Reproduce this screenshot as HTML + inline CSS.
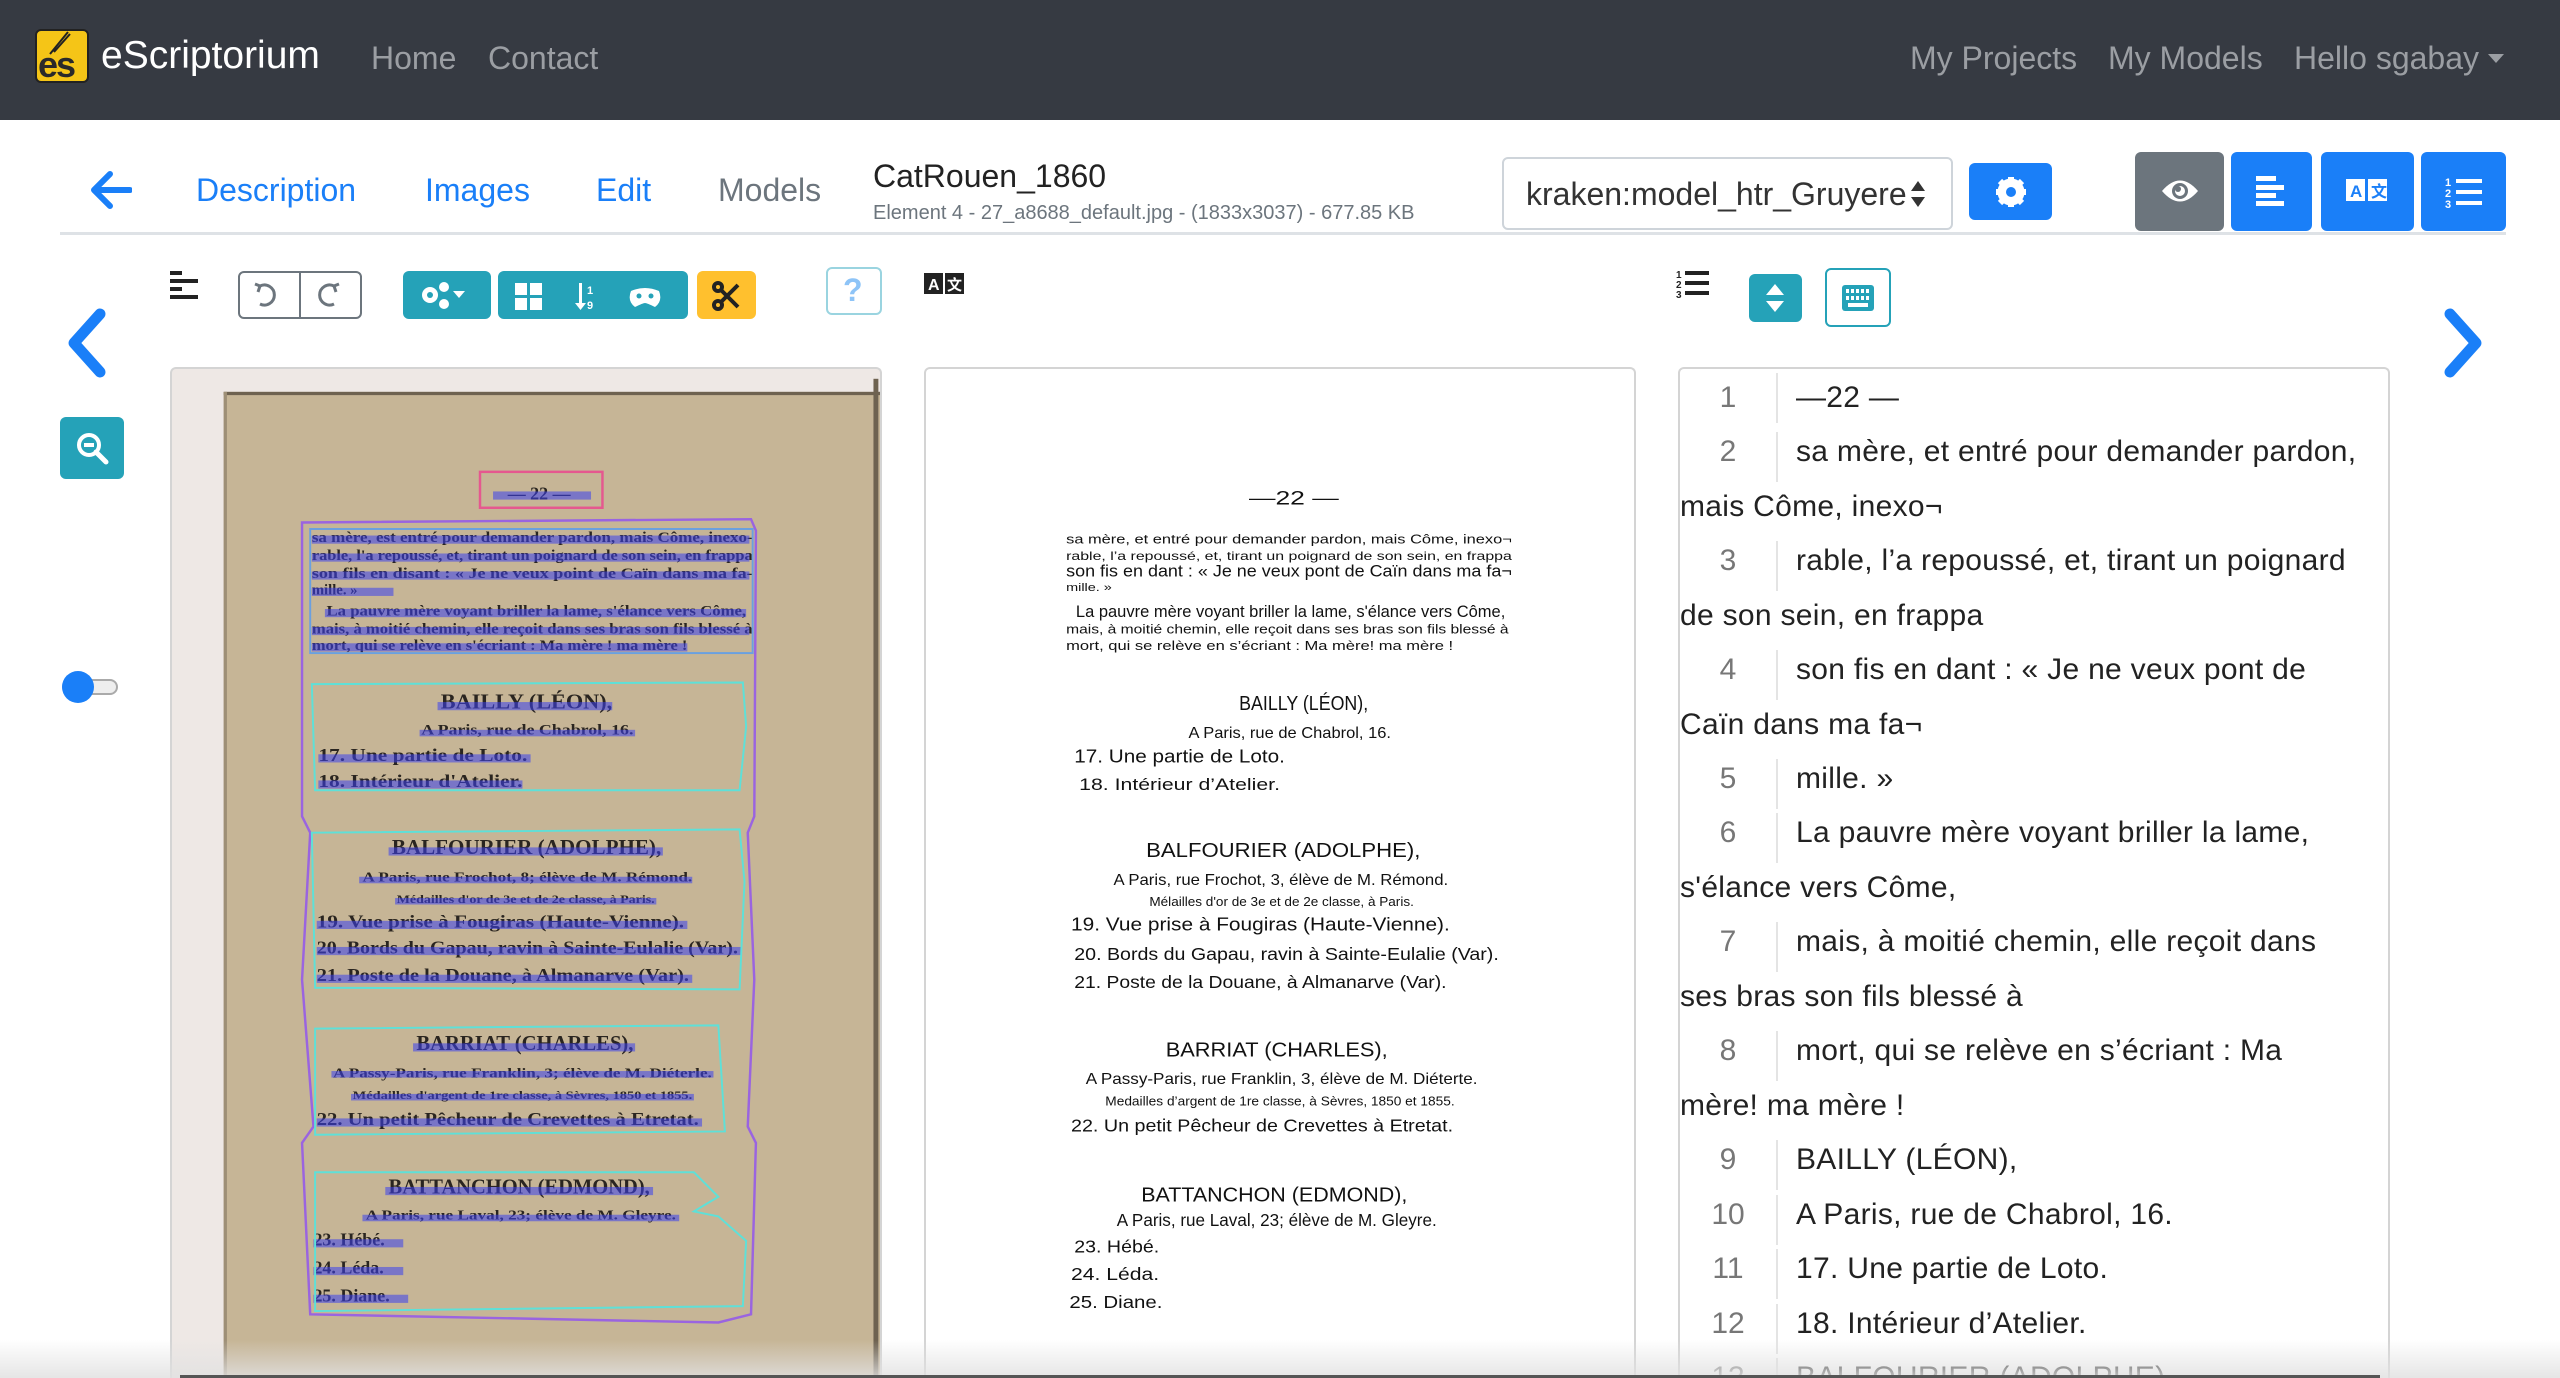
<!DOCTYPE html>
<html><head><meta charset="utf-8"><style>
*{box-sizing:border-box;margin:0;padding:0}
body{width:2560px;height:1378px;overflow:hidden;background:#fff;font-family:"Liberation Sans",sans-serif;position:relative}
.a{position:absolute}
.nav{left:0;top:0;width:2560px;height:120px;background:#363a42}
.nl{color:#9b9ea3;font-size:32px;top:40px}
.tab{font-size:32px;top:172px;color:#1a7ff8}
.btn{border-radius:6px}
.teal{background:#25a2b8}
.blue{background:#1a7ff8}
.panel{border:2px solid #d4d4d4;border-bottom:none;border-radius:6px 6px 0 0;background:#fff;overflow:hidden}
.rl{position:absolute;left:0;font-size:30px;letter-spacing:0.3px;color:#222;white-space:nowrap}
.num{position:absolute;width:96px;text-align:center;color:#777;font-size:30px}
.div{position:absolute;left:96px;width:2px;background:#e4e4e4}
</style></head><body>
<div class="a nav"></div>
<div class="a" style="left:35px;top:29px;width:54px;height:54px;background:#f5c517;border-radius:6px;border:2px solid #222"></div>
<div class="a" style="left:38px;top:44px;font-size:36px;font-weight:bold;color:#2a2a2a;letter-spacing:-2px">es</div>
<svg class="a" style="left:44px;top:28px" width="30" height="30"><path d="M6 26 L24 4 M10 24 L26 6" stroke="#222" stroke-width="2" fill="none"/></svg>
<div class="a" style="left:101px;top:34px;font-size:39px;color:#fff">eScriptorium</div>
<div class="a nl" style="left:371px">Home</div>
<div class="a nl" style="left:488px">Contact</div>
<div class="a nl" style="left:1910px">My Projects</div>
<div class="a nl" style="left:2108px">My Models</div>
<div class="a nl" style="left:2294px">Hello sgabay</div>
<svg class="a" style="left:2488px;top:54px" width="16" height="10"><path d="M0 0H16L8 9Z" fill="#9b9ea3"/></svg>

<svg class="a" style="left:88px;top:170px" width="44" height="40"><path d="M22 4 L6 20 L22 36 M6 20 H42" stroke="#1a7ff8" stroke-width="6" fill="none" stroke-linecap="round" stroke-linejoin="round"/></svg>
<div class="a tab" style="left:196px">Description</div>
<div class="a tab" style="left:425px">Images</div>
<div class="a tab" style="left:596px">Edit</div>
<div class="a tab" style="left:718px;color:#6c757d">Models</div>
<div class="a" style="left:873px;top:158px;font-size:32px;color:#222">CatRouen_1860</div>
<div class="a" style="left:873px;top:202px;font-size:20px;color:#6c757d">Element 4 - 27_a8688_default.jpg - (1833x3037) - 677.85 KB</div>
<div class="a" style="left:1502px;top:157px;width:451px;height:73px;border:2px solid #ced4da;border-radius:6px"></div>
<div class="a" style="left:1526px;top:176px;font-size:32px;color:#333">kraken:model_htr_Gruyere</div>
<svg class="a" style="left:1911px;top:181px" width="14" height="26"><path d="M7 0L14 10H0ZM7 26L14 16H0Z" fill="#333"/></svg>
<div class="a btn blue" style="left:1969px;top:163px;width:83px;height:57px"></div>
<svg class="a" style="left:1994px;top:175px" width="34" height="34" viewBox="0 0 34 34"><circle cx="17" cy="17" r="10" fill="none" stroke="#fff" stroke-width="7"/><g stroke="#fff" stroke-width="6"><path d="M17 2V32M2 17H32M6 6L28 28M28 6L6 28"/></g><circle cx="17" cy="17" r="5" fill="#1a7ff8"/></svg>
<div class="a btn" style="left:2135px;top:152px;width:89px;height:79px;background:#6c757d"></div>
<svg class="a" style="left:2160px;top:176px" width="40" height="30" viewBox="0 0 40 30"><path d="M2 15 Q20 -6 38 15 Q20 36 2 15Z" fill="#fff"/><circle cx="20" cy="15" r="8" fill="#6c757d"/><circle cx="20" cy="15" r="5" fill="#fff"/><circle cx="18" cy="13" r="3" fill="#6c757d"/></svg>
<div class="a btn blue" style="left:2231px;top:152px;width:81px;height:79px"></div>
<svg class="a" style="left:2256px;top:174px" width="32" height="34"><g fill="#fff"><rect x="0" y="2" width="20" height="5"/><rect x="0" y="11" width="28" height="5"/><rect x="0" y="19" width="20" height="5"/><rect x="0" y="27" width="28" height="5"/></g></svg>
<div class="a btn blue" style="left:2321px;top:152px;width:93px;height:79px"></div>
<svg class="a" style="left:2346px;top:179px" width="42" height="22"><rect x="0" y="0" width="19" height="22" fill="#fff"/><rect x="22" y="0" width="19" height="22" fill="#fff"/><text x="4" y="18" font-size="17" font-weight="bold" fill="#1a7ff8" font-family="Liberation Sans">A</text><text x="25" y="18" font-size="16" font-weight="bold" fill="#1a7ff8" font-family="Noto Sans CJK SC,sans-serif">文</text></svg>
<div class="a btn blue" style="left:2421px;top:152px;width:85px;height:79px"></div>
<svg class="a" style="left:2445px;top:175px" width="40" height="34"><g fill="#fff"><text x="0" y="11" font-size="11" font-weight="bold" font-family="Liberation Sans">1</text><text x="0" y="22" font-size="11" font-weight="bold" font-family="Liberation Sans">2</text><text x="0" y="33" font-size="11" font-weight="bold" font-family="Liberation Sans">3</text><rect x="11" y="4" width="26" height="4"/><rect x="11" y="15" width="26" height="4"/><rect x="11" y="26" width="26" height="4"/></g></svg>
<div class="a" style="left:60px;top:232px;width:2446px;height:3px;background:#dee2e6"></div>

<svg class="a" style="left:170px;top:271px" width="30" height="28"><g fill="#222"><rect x="0" y="0" width="12" height="4"/><rect x="0" y="8" width="28" height="4"/><rect x="0" y="16" width="12" height="4"/><rect x="0" y="24" width="28" height="4"/></g></svg>
<div class="a" style="left:238px;top:271px;width:124px;height:48px;border:2px solid #6c757d;border-radius:6px"></div>
<div class="a" style="left:299px;top:271px;width:2px;height:48px;background:#6c757d"></div>
<svg class="a" style="left:252px;top:280px" width="100" height="30"><g fill="none" stroke="#6c757d" stroke-width="3"><path d="M8 6 A10 10 0 1 1 8 24"/><path d="M3 4 L8 6 L6 12"/><path d="M82 6 A10 10 0 1 0 82 24"/><path d="M87 4 L82 6 L84 12"/></g></svg>
<div class="a btn teal" style="left:403px;top:271px;width:88px;height:48px"></div>
<svg class="a" style="left:418px;top:281px" width="60" height="30"><g fill="#fff"><circle cx="12" cy="14" r="8"/><circle cx="26" cy="6" r="5"/><circle cx="26" cy="23" r="5"/><path d="M35 10H47L41 17Z"/></g><circle cx="12" cy="14" r="3" fill="#25a2b8"/></svg>
<div class="a btn teal" style="left:498px;top:271px;width:190px;height:48px"></div>
<svg class="a" style="left:515px;top:281px" width="160" height="30"><g fill="#fff"><rect x="0" y="2" width="12" height="12"/><rect x="15" y="2" width="12" height="12"/><rect x="0" y="17" width="12" height="12"/><rect x="15" y="17" width="12" height="12"/><rect x="64" y="2" width="3" height="22"/><path d="M60 22H71L65.5 29Z"/><text x="72" y="13" font-size="11" font-weight="bold" font-family="Liberation Sans">1</text><text x="72" y="28" font-size="11" font-weight="bold" font-family="Liberation Sans">9</text><path d="M116 10 Q130 4 144 10 Q148 20 140 26 Q132 22 130 22 Q128 22 120 26 Q112 20 116 10Z"/></g><circle cx="124" cy="15" r="2.5" fill="#25a2b8"/><circle cx="136" cy="15" r="2.5" fill="#25a2b8"/></svg>
<div class="a btn" style="left:697px;top:271px;width:59px;height:48px;background:#ffc02e"></div>
<svg class="a" style="left:712px;top:281px" width="30" height="30"><g stroke="#222" stroke-width="4" fill="none"><circle cx="6" cy="6" r="4"/><circle cx="6" cy="24" r="4"/><path d="M9 9L26 26M9 21L26 4"/></g></svg>
<div class="a" style="left:826px;top:267px;width:56px;height:48px;border:2px solid #9ad4e0;border-radius:6px"></div>
<div class="a" style="left:843px;top:272px;font-size:32px;font-weight:bold;color:#8ec4f7">?</div>
<svg class="a" style="left:924px;top:273px" width="40" height="22"><rect x="0" y="0" width="19" height="21" fill="#222"/><rect x="21" y="0" width="19" height="21" fill="#222"/><text x="4" y="17" font-size="16" font-weight="bold" fill="#fff" font-family="Liberation Sans">A</text><text x="23" y="17" font-size="15" font-weight="bold" fill="#fff" font-family="Noto Sans CJK SC,sans-serif">文</text></svg>

<svg class="a" style="left:1676px;top:268px" width="36" height="32"><g fill="#222"><text x="0" y="10" font-size="10" font-weight="bold" font-family="Liberation Sans">1</text><text x="0" y="20" font-size="10" font-weight="bold" font-family="Liberation Sans">2</text><text x="0" y="30" font-size="10" font-weight="bold" font-family="Liberation Sans">3</text><rect x="9" y="3" width="24" height="4"/><rect x="9" y="13" width="24" height="4"/><rect x="9" y="23" width="24" height="4"/></g></svg>
<div class="a btn teal" style="left:1749px;top:274px;width:53px;height:48px"></div>
<svg class="a" style="left:1764px;top:284px" width="22" height="28"><g fill="#fff"><path d="M11 0L20 11H2Z"/><path d="M11 28L20 17H2Z"/></g></svg>
<div class="a" style="left:1825px;top:268px;width:66px;height:59px;border:2px solid #25a2b8;border-radius:6px"></div>
<svg class="a" style="left:1842px;top:285px" width="32" height="26"><rect x="0" y="0" width="32" height="26" rx="3" fill="#25a2b8"/><g fill="#fff"><rect x="4" y="4" width="3" height="4"/><rect x="9" y="4" width="3" height="4"/><rect x="14" y="4" width="3" height="4"/><rect x="19" y="4" width="3" height="4"/><rect x="24" y="4" width="3" height="4"/><rect x="4" y="11" width="3" height="4"/><rect x="9" y="11" width="3" height="4"/><rect x="14" y="11" width="3" height="4"/><rect x="19" y="11" width="3" height="4"/><rect x="24" y="11" width="3" height="4"/><rect x="6" y="18" width="20" height="4"/></g></svg>

<svg class="a" style="left:62px;top:308px" width="48" height="70"><path d="M38 6 L12 35 L38 64" stroke="#1a7ff8" stroke-width="11" fill="none" stroke-linecap="round" stroke-linejoin="round"/></svg>
<svg class="a" style="left:2440px;top:308px" width="48" height="70"><path d="M10 6 L36 35 L10 64" stroke="#1a7ff8" stroke-width="11" fill="none" stroke-linecap="round" stroke-linejoin="round"/></svg>
<div class="a btn teal" style="left:60px;top:417px;width:64px;height:62px"></div>
<svg class="a" style="left:76px;top:432px" width="34" height="34"><circle cx="13" cy="13" r="10" stroke="#fff" stroke-width="4" fill="none"/><path d="M20 20L30 30" stroke="#fff" stroke-width="5" stroke-linecap="round"/><rect x="8" y="11" width="10" height="4" fill="#fff"/></svg>
<div class="a" style="left:62px;top:679px;width:56px;height:16px;border:2px solid #aaa;border-radius:8px;background:#eee"></div>
<div class="a" style="left:62px;top:671px;width:32px;height:32px;border-radius:50%;background:#1a7ff8"></div>

<div class="a panel" style="left:170px;top:367px;width:712px;height:1011px;background:#eee8e5"></div>
<div class="a panel" style="left:924px;top:367px;width:712px;height:1011px"></div>
<div class="a panel" style="left:1678px;top:367px;width:712px;height:1011px"></div>

<svg class="a" style="left:0;top:0" width="2560" height="1378" viewBox="0 0 1568 844" preserveAspectRatio="none">
<rect x="137" y="240" width="402" height="604" fill="#c6b596"/>
<rect x="137" y="240" width="402" height="2" fill="#6e6250"/>
<rect x="137" y="240" width="2" height="604" fill="#9e8f76"/>
<rect x="535" y="232" width="3" height="612" fill="#6e6250"/>
<g font-family="Liberation Serif,serif" fill="#2a2520" font-weight="bold">
<text x="311" y="306" font-size="11">— 22 —</text>
<text x="191" y="332" font-size="9" textLength="270" lengthAdjust="spacingAndGlyphs">sa mère, est entré pour demander pardon, mais Côme, inexo-</text>
<text x="191" y="343" font-size="9" textLength="270" lengthAdjust="spacingAndGlyphs">rable, l'a repoussé, et, tirant un poignard de son sein, en frappa</text>
<text x="191" y="354" font-size="9" textLength="270" lengthAdjust="spacingAndGlyphs">son fils en disant : « Je ne veux point de Caïn dans ma fa-</text>
<text x="191" y="364" font-size="9">mille. »</text>
<text x="200" y="377" font-size="9" textLength="257" lengthAdjust="spacingAndGlyphs">La pauvre mère voyant briller la lame, s'élance vers Côme,</text>
<text x="191" y="388" font-size="9" textLength="270" lengthAdjust="spacingAndGlyphs">mais, à moitié chemin, elle reçoit dans ses bras son fils blessé à</text>
<text x="191" y="398" font-size="9" textLength="230" lengthAdjust="spacingAndGlyphs">mort, qui se relève en s'écriant : Ma mère ! ma mère !</text>
<text x="270" y="434" font-size="13" textLength="105" lengthAdjust="spacingAndGlyphs">BAILLY (LÉON),</text>
<text x="258" y="450" font-size="9" textLength="130" lengthAdjust="spacingAndGlyphs">A Paris, rue de Chabrol, 16.</text>
<text x="195" y="466" font-size="11" textLength="128" lengthAdjust="spacingAndGlyphs">17. Une partie de Loto.</text>
<text x="195" y="482" font-size="11" textLength="125" lengthAdjust="spacingAndGlyphs">18. Intérieur d'Atelier.</text>
<text x="240" y="523" font-size="13" textLength="165" lengthAdjust="spacingAndGlyphs">BALFOURIER (ADOLPHE),</text>
<text x="222" y="540" font-size="8.5" textLength="202" lengthAdjust="spacingAndGlyphs">A Paris, rue Frochot, 8; élève de M. Rémond.</text>
<text x="243" y="553" font-size="7" textLength="158" lengthAdjust="spacingAndGlyphs">Médailles d'or de 3e et de 2e classe, à Paris.</text>
<text x="194" y="568" font-size="11" textLength="225" lengthAdjust="spacingAndGlyphs">19. Vue prise à Fougiras (Haute-Vienne).</text>
<text x="194" y="584" font-size="11" textLength="258" lengthAdjust="spacingAndGlyphs">20. Bords du Gapau, ravin à Sainte-Eulalie (Var).</text>
<text x="194" y="601" font-size="11" textLength="228" lengthAdjust="spacingAndGlyphs">21. Poste de la Douane, à Almanarve (Var).</text>
<text x="255" y="643" font-size="13" textLength="133" lengthAdjust="spacingAndGlyphs">BARRIAT (CHARLES),</text>
<text x="204" y="660" font-size="8.5" textLength="232" lengthAdjust="spacingAndGlyphs">A Passy-Paris, rue Franklin, 3; élève de M. Diéterle.</text>
<text x="216" y="673" font-size="7" textLength="208" lengthAdjust="spacingAndGlyphs">Médailles d'argent de 1re classe, à Sèvres, 1850 et 1855.</text>
<text x="194" y="689" font-size="11" textLength="234" lengthAdjust="spacingAndGlyphs">22. Un petit Pêcheur de Crevettes à Etretat.</text>
<text x="238" y="731" font-size="13" textLength="160" lengthAdjust="spacingAndGlyphs">BATTANCHON (EDMOND),</text>
<text x="224" y="747" font-size="8.5" textLength="190" lengthAdjust="spacingAndGlyphs">A Paris, rue Laval, 23; élève de M. Gleyre.</text>
<text x="192" y="763" font-size="11">23. Hébé.</text>
<text x="192" y="780" font-size="11">24. Léda.</text>
<text x="192" y="797" font-size="11">25. Diane.</text>
</g>
<g fill="#3a3ff0" fill-opacity="0.55">
<rect x="302" y="301" width="60" height="5"/>
<rect x="191" y="328" width="268" height="5"/><rect x="191" y="339" width="268" height="5"/><rect x="191" y="350" width="268" height="5"/><rect x="191" y="360" width="50" height="5"/>
<rect x="199" y="373" width="258" height="5"/><rect x="191" y="384" width="268" height="5"/><rect x="191" y="394" width="230" height="5"/>
<rect x="268" y="430" width="107" height="5"/><rect x="257" y="447" width="132" height="4"/><rect x="195" y="462" width="130" height="5"/><rect x="195" y="478" width="125" height="5"/>
<rect x="238" y="519" width="168" height="5"/><rect x="220" y="537" width="204" height="4"/><rect x="242" y="550" width="160" height="4"/>
<rect x="194" y="564" width="227" height="5"/><rect x="194" y="580" width="260" height="5"/><rect x="194" y="597" width="230" height="5"/>
<rect x="253" y="639" width="136" height="5"/><rect x="203" y="656" width="234" height="4"/><rect x="215" y="670" width="210" height="4"/><rect x="194" y="685" width="236" height="5"/>
<rect x="236" y="727" width="164" height="5"/><rect x="222" y="744" width="194" height="4"/><rect x="192" y="759" width="55" height="5"/><rect x="192" y="776" width="55" height="5"/><rect x="192" y="793" width="58" height="5"/>
</g>
<rect x="294" y="289" width="75" height="22" fill="none" stroke="#e5588f" stroke-width="1.5"/>
<path d="M185 320 L460 318 L463 325 L462 500 L458 510 L462 600 L458 690 L463 700 L460 805 L440 810 L190 805 L185 700 L192 690 L185 600 L190 510 L185 500 Z" fill="none" stroke="#9a64e0" stroke-width="1.5"/>
<rect x="190" y="324" width="271" height="76" fill="none" stroke="#6aa0e0" stroke-width="1.2"/>
<path d="M191 419 L455 418 L457 445 L453 484 L193 484 Z" fill="none" stroke="#5ee0d8" stroke-width="1.2"/>
<path d="M191 510 L453 508 L456 540 L453 606 L193 605 Z" fill="none" stroke="#5ee0d8" stroke-width="1.2"/>
<path d="M193 630 L440 628 L444 693 L193 695 Z" fill="none" stroke="#5ee0d8" stroke-width="1.2"/>
<path d="M193 718 L425 718 L440 733 L425 742 L440 745 L457 760 L455 800 L193 803 Z" fill="none" stroke="#5ee0d8" stroke-width="1.2"/>
<g font-family="Liberation Sans,sans-serif" fill="#111">
<text x="765" y="309" font-size="12" textLength="55" lengthAdjust="spacingAndGlyphs">—22 —</text>
<text x="653" y="333" font-size="8" textLength="273" lengthAdjust="spacingAndGlyphs">sa mère, et entré pour demander pardon, mais Côme, inexo¬</text>
<text x="653" y="343" font-size="7.5" textLength="273" lengthAdjust="spacingAndGlyphs">rable, l’a repoussé, et, tirant un poignard de son sein, en frappa</text>
<text x="653" y="353" font-size="10" textLength="273" lengthAdjust="spacingAndGlyphs">son fis en dant : « Je ne veux pont de Caïn dans ma fa¬</text>
<text x="653" y="362" font-size="7" textLength="28" lengthAdjust="spacingAndGlyphs">mille. »</text>
<text x="659" y="378" font-size="10" textLength="263" lengthAdjust="spacingAndGlyphs">La pauvre mère voyant briller la lame, s'élance vers Côme,</text>
<text x="653" y="388" font-size="8" textLength="271" lengthAdjust="spacingAndGlyphs">mais, à moitié chemin, elle reçoit dans ses bras son fils blessé à</text>
<text x="653" y="398" font-size="8" textLength="237" lengthAdjust="spacingAndGlyphs">mort, qui se relève en s’écriant : Ma mère! ma mère !</text>
<text x="759" y="435" font-size="12.5" textLength="79" lengthAdjust="spacingAndGlyphs">BAILLY (LÉON),</text>
<text x="728" y="452" font-size="9.5" textLength="124" lengthAdjust="spacingAndGlyphs">A Paris, rue de Chabrol, 16.</text>
<text x="658" y="467" font-size="11.5" textLength="129" lengthAdjust="spacingAndGlyphs">17. Une partie de Loto.</text>
<text x="661" y="484" font-size="10" textLength="123" lengthAdjust="spacingAndGlyphs">18. Intérieur d’Atelier.</text>
<text x="702" y="525" font-size="12.5" textLength="168" lengthAdjust="spacingAndGlyphs">BALFOURIER (ADOLPHE),</text>
<text x="682" y="542" font-size="9.5" textLength="205" lengthAdjust="spacingAndGlyphs">A Paris, rue Frochot, 3, élève de M. Rémond.</text>
<text x="704" y="555" font-size="8" textLength="162" lengthAdjust="spacingAndGlyphs">Mélailles d'or de 3e et de 2e classe, à Paris.</text>
<text x="656" y="570" font-size="11.5" textLength="232" lengthAdjust="spacingAndGlyphs">19. Vue prise à Fougiras (Haute-Vienne).</text>
<text x="658" y="588" font-size="10.5" textLength="260" lengthAdjust="spacingAndGlyphs">20. Bords du Gapau, ravin à Sainte-Eulalie (Var).</text>
<text x="658" y="605" font-size="10.5" textLength="228" lengthAdjust="spacingAndGlyphs">21. Poste de la Douane, à Almanarve (Var).</text>
<text x="714" y="647" font-size="12.5" textLength="136" lengthAdjust="spacingAndGlyphs">BARRIAT (CHARLES),</text>
<text x="665" y="664" font-size="9.5" textLength="240" lengthAdjust="spacingAndGlyphs">A Passy-Paris, rue Franklin, 3, élève de M. Diéterte.</text>
<text x="677" y="677" font-size="8" textLength="214" lengthAdjust="spacingAndGlyphs">Medailles d’argent de 1re classe, à Sèvres, 1850 et 1855.</text>
<text x="656" y="693" font-size="10.5" textLength="234" lengthAdjust="spacingAndGlyphs">22. Un petit Pêcheur de Crevettes à Etretat.</text>
<text x="699" y="736" font-size="12.5" textLength="163" lengthAdjust="spacingAndGlyphs">BATTANCHON (EDMOND),</text>
<text x="684" y="751" font-size="11" textLength="196" lengthAdjust="spacingAndGlyphs">A Paris, rue Laval, 23; élève de M. Gleyre.</text>
<text x="658" y="767" font-size="10.5" textLength="52" lengthAdjust="spacingAndGlyphs">23. Hébé.</text>
<text x="656" y="784" font-size="10.5" textLength="54" lengthAdjust="spacingAndGlyphs">24. Léda.</text>
<text x="655" y="801" font-size="10.5" textLength="57" lengthAdjust="spacingAndGlyphs">25. Diane.</text>
</g>
</svg>

<div class="a" style="left:1680px;top:369px;width:708px;height:1009px;overflow:hidden">
<div style="position:absolute;left:0;top:4px;width:708px;height:1009px">
<div class="div" style="top:0;height:50px"></div>
<div class="num" style="top:8px">1</div><div class="rl" style="left:116px;top:8px">—22 —</div>
<div class="div" style="top:59px;height:50px"></div>
<div class="num" style="top:62px">2</div><div class="rl" style="left:116px;top:62px">sa mère, et entré pour demander pardon,</div>
<div class="rl" style="top:117px">mais Côme, inexo¬</div>
<div class="div" style="top:168px;height:50px"></div>
<div class="num" style="top:171px">3</div><div class="rl" style="left:116px;top:171px">rable, l’a repoussé, et, tirant un poignard</div>
<div class="rl" style="top:226px">de son sein, en frappa</div>
<div class="div" style="top:277px;height:50px"></div>
<div class="num" style="top:280px">4</div><div class="rl" style="left:116px;top:280px">son fis en dant : « Je ne veux pont de</div>
<div class="rl" style="top:335px">Caïn dans ma fa¬</div>
<div class="div" style="top:386px;height:50px"></div>
<div class="num" style="top:389px">5</div><div class="rl" style="left:116px;top:389px">mille. »</div>
<div class="div" style="top:440px;height:50px"></div>
<div class="num" style="top:443px">6</div><div class="rl" style="left:116px;top:443px">La pauvre mère voyant briller la lame,</div>
<div class="rl" style="top:498px">s'élance vers Côme,</div>
<div class="div" style="top:549px;height:50px"></div>
<div class="num" style="top:552px">7</div><div class="rl" style="left:116px;top:552px">mais, à moitié chemin, elle reçoit dans</div>
<div class="rl" style="top:607px">ses bras son fils blessé à</div>
<div class="div" style="top:658px;height:50px"></div>
<div class="num" style="top:661px">8</div><div class="rl" style="left:116px;top:661px">mort, qui se relève en s’écriant : Ma</div>
<div class="rl" style="top:716px">mère! ma mère !</div>
<div class="div" style="top:767px;height:50px"></div>
<div class="num" style="top:770px">9</div><div class="rl" style="left:116px;top:770px">BAILLY (LÉON),</div>
<div class="div" style="top:822px;height:50px"></div>
<div class="num" style="top:825px">10</div><div class="rl" style="left:116px;top:825px">A Paris, rue de Chabrol, 16.</div>
<div class="div" style="top:876px;height:50px"></div>
<div class="num" style="top:879px">11</div><div class="rl" style="left:116px;top:879px">17. Une partie de Loto.</div>
<div class="div" style="top:931px;height:50px"></div>
<div class="num" style="top:934px">12</div><div class="rl" style="left:116px;top:934px">18. Intérieur d’Atelier.</div>
<div class="div" style="top:985px;height:50px"></div>
<div class="num" style="top:988px">13</div><div class="rl" style="left:116px;top:988px">BALFOURIER (ADOLPHE),</div>
</div>
</div>
<div class="a" style="left:0;top:1340px;width:2560px;height:38px;background:linear-gradient(rgba(240,240,240,0),rgba(225,225,225,.85))"></div>
<div class="a" style="left:180px;top:1375px;width:2200px;height:3px;background:#555"></div>
</body></html>
